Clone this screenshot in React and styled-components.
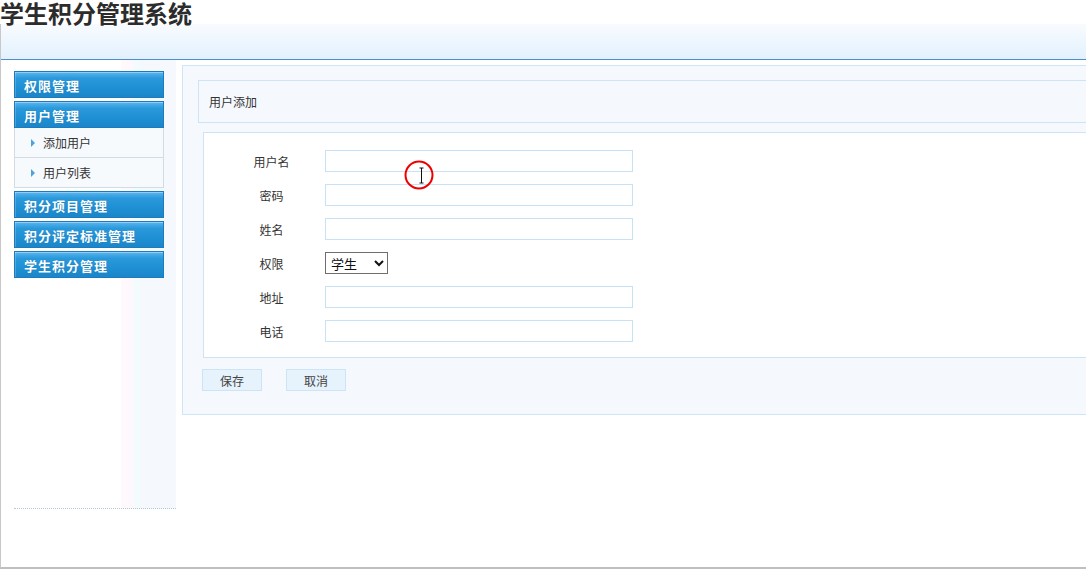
import React from "react";
import styled, { createGlobalStyle } from "styled-components";

const GlobalStyle = createGlobalStyle`
  html, body {
    margin: 0;
    padding: 0;
    background: #f3f1f1;
    overflow: hidden;
  }
  body {
    font-family: "Noto Sans CJK SC", "Noto Sans", sans-serif;
    font-size: 12px;
    color: #333;
  }
`;

const menu = [
  { title: "权限管理" },
  { title: "用户管理", items: ["添加用户", "用户列表"] },
  { title: "积分项目管理" },
  { title: "积分评定标准管理" },
  { title: "学生积分管理" },
];

const fields = [
  { label: "用户名" },
  { label: "密码", type: "password" },
  { label: "姓名" },
  { label: "权限", select: true },
  { label: "地址" },
  { label: "电话" },
];

export default function App() {
  return (
    <>
      <GlobalStyle />
      <Page>
        <Title>学生积分管理系统</Title>
        <Frame>
          <HeaderBand />
          <Body>
            <Sidebar>
              {menu.map((m) => (
                <MenuGroup key={m.title}>
                  <MenuHead>{m.title}</MenuHead>
                  {m.items && (
                    <SubList>
                      {m.items.map((it) => (
                        <SubItem key={it}>
                          <Arrow />
                          {it}
                        </SubItem>
                      ))}
                    </SubList>
                  )}
                </MenuGroup>
              ))}
            </Sidebar>
            <Main>
              <PanelTitle>用户添加</PanelTitle>
              <FormBox>
                {fields.map((f) => (
                  <Row key={f.label}>
                    <Label>{f.label}</Label>
                    {f.select ? (
                      <Select defaultValue="学生">
                        <option>学生</option>
                        <option>管理员</option>
                      </Select>
                    ) : (
                      <Input type={f.type || "text"} />
                    )}
                  </Row>
                ))}
              </FormBox>
              <Buttons>
                <Button>保存</Button>
                <Button>取消</Button>
              </Buttons>
            </Main>
          </Body>
          <ClickMark width="32" height="32" viewBox="0 0 32 32">
            <circle cx="16" cy="16" r="13.5" fill="none" stroke="#ee0000" strokeWidth="2" />
            <path d="M16.5 9h4M18.5 9v15M16.5 24h4" stroke="#111" strokeWidth="1" fill="none" />
          </ClickMark>
        </Frame>
      </Page>
    </>
  );
}

const Page = styled.div`
  width: 1086px;
  height: 573px;
  background: #fff;
  overflow: hidden;
  position: relative;
`;

const Title = styled.h1`
  position: relative;
  z-index: 1;
  margin: 0;
  height: 24px;
  line-height: 25px;
  font-size: 24px;
  font-weight: 700;
  color: #2c2c2c;
  white-space: nowrap;
`;

const Frame = styled.div`
  position: relative;
  height: 543px;
  border-left: 1px solid #c8c8c8;
  border-bottom: 2px solid #bfbfbf;
  background: #fff;
`;

const HeaderBand = styled.div`
  height: 35px;
  background: linear-gradient(#f8fbfe 0%, #eef7fe 45%, #e3f0fc 100%);
  border-bottom: 1px solid #4a8fd0;
`;

const Body = styled.div`
  display: flex;
  align-items: flex-start;
  gap: 6px;
`;

const Sidebar = styled.div`
  margin-left: 13px;
  width: 162px;
  height: 449px;
  padding-top: 11px;
  box-sizing: border-box;
  display: flex;
  flex-direction: column;
  gap: 3px;
  border-bottom: 1px dotted #b8c8d4;
  background: linear-gradient(
    to right,
    #fff 0%,
    #fff 66%,
    #fff9fd 66%,
    #fdf8fd 74%,
    #f3fcfd 74%,
    #f3fcfd 78%,
    #f5f9fe 78%
  );
`;

const MenuGroup = styled.div`
  width: 150px;
`;

const MenuHead = styled.div`
  height: 25px;
  line-height: 27px;
  padding-left: 9px;
  border: 1px solid #1d7bbd;
  background: linear-gradient(#5ab6ee 0%, #2999dc 25%, #1e8ed2 70%, #1b86c9 100%);
  box-shadow: inset 0 1px 0 rgba(255, 255, 255, 0.35), inset 1px 0 0 rgba(255, 255, 255, 0.2);
  color: #fff;
  font-size: 13px;
  font-weight: 700;
  letter-spacing: 1px;
  text-shadow: 0 0 1px rgba(0, 60, 110, 0.4);
`;

const SubList = styled.div`
  border: 1px solid #d2dce5;
  border-top: none;
  background: #f7fafd;
`;

const SubItem = styled.div`
  height: 29px;
  display: flex;
  align-items: center;
  padding-left: 16px;
  font-size: 12px;
  color: #333;
  & + & {
    border-top: 1px solid #d2dce5;
  }
`;

const Arrow = styled.span`
  width: 0;
  height: 0;
  margin-right: 8px;
  border-top: 4px solid transparent;
  border-bottom: 4px solid transparent;
  border-left: 4px solid #4aa2de;
`;

const Main = styled.div`
  flex: 1;
  margin-top: 5px;
  padding: 14px 0 23px 15px;
  border: 1px solid #cfe5f8;
  border-right: none;
  background: #f5f9fe;
`;

const PanelTitle = styled.div`
  height: 41px;
  line-height: 41px;
  padding-left: 10px;
  border: 1px solid #cde3f6;
  border-right: none;
  background: #f5f9fe;
  font-size: 12px;
  color: #333;
`;

const FormBox = styled.div`
  margin: 9px 0 0 5px;
  padding: 11px 0 9px 14px;
  border: 1px solid #cde3f6;
  border-right: none;
  background: #fff;
`;

const Row = styled.div`
  display: flex;
  align-items: center;
  height: 34px;
`;

const Label = styled.div`
  width: 107px;
  text-align: center;
  font-size: 12px;
  color: #333;
`;

const Input = styled.input`
  width: 308px;
  height: 22px;
  box-sizing: border-box;
  border: 1px solid #c7e1f6;
  background: #fff;
  outline: none;
  padding: 0 4px;
`;

const Select = styled.select`
  width: 63px;
  height: 22px;
  box-sizing: border-box;
  border: 1px solid #6e6e6e;
  border-radius: 0;
  background: #fff;
  font-family: "Noto Sans CJK SC", sans-serif;
  font-size: 13px;
  color: #111;
  padding: 0 0 0 1px;
`;

const Buttons = styled.div`
  display: flex;
  gap: 24px;
  margin: 11px 0 0 4px;
`;

const Button = styled.button`
  width: 60px;
  height: 22px;
  padding: 0;
  border: 1px solid #cde3f6;
  background: #e6f2fc;
  font-family: "Noto Sans CJK SC", sans-serif;
  font-size: 12px;
  color: #444;
`;

const ClickMark = styled.svg`
  position: absolute;
  left: 402px;
  top: 135px;
  pointer-events: none;
`;
